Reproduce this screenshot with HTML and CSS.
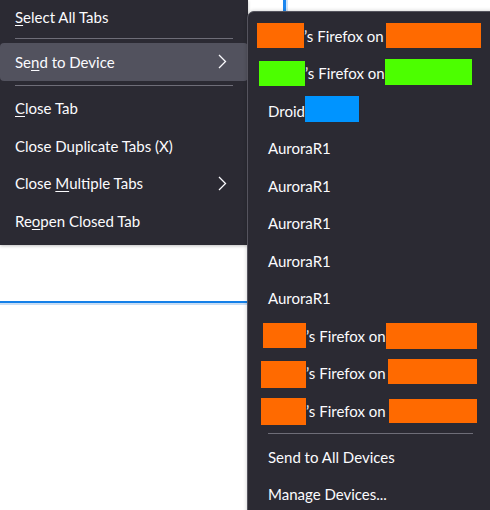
FILE: index.html
```html
<!DOCTYPE html>
<html lang="en">
<head>
    <meta charset="UTF-8">
    <meta name="viewport" content="width=device-width, initial-scale=1.0">
    <title>Tab Context Menu</title>
    <link rel="stylesheet" href="styles.css">
</head>
<body>
    <!-- page content behind the popups -->
    <div class="page">
        <div class="pane-left">
            <div class="field"></div>
        </div>
        <div class="pane-right"></div>
    </div>

    <!-- tab context menu -->
    <div class="menu tab-menu">
        <div class="item first"><span class="label"><u>S</u>elect All Tabs</span></div>
        <div class="sep"></div>
        <div class="item active">
            <span class="label">Se<u>n</u>d to Device</span>
            <svg class="chevron" viewBox="0 0 9 15"><path d="M1 1 L7.5 7.5 L1 14"/></svg>
        </div>
        <div class="sep"></div>
        <div class="item"><span class="label"><u>C</u>lose Tab</span></div>
        <div class="item"><span class="label">Close Duplicate Tabs (X)</span></div>
        <div class="item">
            <span class="label">Close <u>M</u>ultiple Tabs</span>
            <svg class="chevron" viewBox="0 0 9 15"><path d="M1 1 L7.5 7.5 L1 14"/></svg>
        </div>
        <div class="item"><span class="label">Re<u>o</u>pen Closed Tab</span></div>
    </div>

    <!-- send to device submenu -->
    <div class="menu device-menu">
        <div class="item">
            <span class="redact orange r1a"></span>
            <span class="owner w82">’s Firefox on</span>
            <span class="redact orange r1b"></span>
        </div>
        <div class="item">
            <span class="redact green r2a"></span>
            <span class="owner w80">’s Firefox on</span>
            <span class="redact green r2b"></span>
        </div>
        <div class="item">
            <span>Droid</span>
            <span class="redact blue r3a"></span>
        </div>
        <div class="item">AuroraR1</div>
        <div class="item">AuroraR1</div>
        <div class="item">AuroraR1</div>
        <div class="item">AuroraR1</div>
        <div class="item">AuroraR1</div>
        <div class="item">
            <span class="redact orange r9a"></span>
            <span class="owner w80">’s Firefox on</span>
            <span class="redact orange r9b"></span>
        </div>
        <div class="item">
            <span class="redact orange r10a"></span>
            <span class="owner w82">’s Firefox on</span>
            <span class="redact orange r10b"></span>
        </div>
        <div class="item">
            <span class="redact orange r11a"></span>
            <span class="owner w83">’s Firefox on</span>
            <span class="redact orange r11b"></span>
        </div>
        <div class="sep"></div>
        <div class="item">Send to All Devices</div>
        <div class="item">Manage Devices...</div>
    </div>
</body>
</html>
```

FILE: styles.css
```css
* {
    margin: 0;
    padding: 0;
    box-sizing: border-box;
}
body {
    position: relative;
    width: 490px;
    height: 510px;
    overflow: hidden;
    background: #ffffff;
    font-family: "Lato", "Liberation Sans", sans-serif;
    font-size: 15px;
    color: #fbfbfe;
}
.page {
    display: flex;
    height: 100%;
}
.pane-left {
    width: 283px;
}
.field {
    height: 303px;
    border-bottom: 2px solid #1480e8;
    box-shadow: 0 2px 0 #c8ddf4;
}
.pane-right {
    flex: 1;
    border-left: 3px solid #1a86f0;
    box-shadow: inset 2px 0 0 #cfe3f8;
}

/* popups */
.menu {
    position: absolute;
    background: #2b2a33;
}
.tab-menu {
    top: 0;
    left: 0;
    width: 248px;
    height: 245px;
    box-shadow: 0 1px 3px rgba(0, 0, 0, 0.25);
}
.device-menu {
    top: 11px;
    left: 247px;
    width: 260px;
    height: 520px;
    padding-top: 5px;
    border: 1px solid #55545e;
    border-radius: 7px 0 0 0;
    box-shadow: 0 0 4px rgba(0, 0, 0, 0.2);
}
.item {
    display: flex;
    align-items: center;
    height: 37.5px;
    white-space: nowrap;
}
.tab-menu .item {
    padding: 0 21px 0 15px;
}
.tab-menu .item.first {
    height: 34px;
}
.device-menu .item {
    padding-left: 20px;
}
.item.active {
    background: #52525e;
    border-radius: 4px;
}
.label {
    flex: 1;
}
.label u {
    text-underline-offset: 2px;
}
.chevron {
    width: 9px;
    height: 15px;
}
.chevron path {
    fill: none;
    stroke: #fbfbfe;
    stroke-width: 1.3;
}
.sep {
    display: flex;
    align-items: center;
    height: 9px;
    padding: 0 15px;
}
.device-menu .sep {
    height: 8.5px;
    padding: 0 33px 0 20px;
}
.sep::before {
    content: "";
    flex: 1;
    height: 1px;
    background: #6e6d78;
}

/* painted-over names */
.redact {
    display: inline-block;
    height: 25px;
    flex-shrink: 0;
}
.orange { background: #ff6a00; }
.green { background: #4cff00; }
.blue { background: #0094ff; }
.owner {
    flex-shrink: 0;
    overflow: hidden;
}
.w80 { width: 80px; }
.w82 { width: 82px; }
.w83 { width: 83px; }
.r1a { width: 47px; margin-left: -11px; }
.r1b { width: 95px; }
.r2a { width: 46px; margin-left: -9px; }
.r2b { width: 87px; margin-top: -3px; height: 26px; }
.r3a { width: 54px; height: 26px; margin-top: -4px; }
.r9a { width: 43px; margin-left: -5px; }
.r9b { width: 91px; height: 26px; }
.r10a { width: 45px; margin-left: -7px; height: 27px; margin-top: 3px; }
.r10b { width: 89px; margin-top: -3px; }
.r11a { width: 45px; margin-left: -7px; height: 27px; margin-top: 2px; }
.r11b { width: 88px; height: 24px; }
```
